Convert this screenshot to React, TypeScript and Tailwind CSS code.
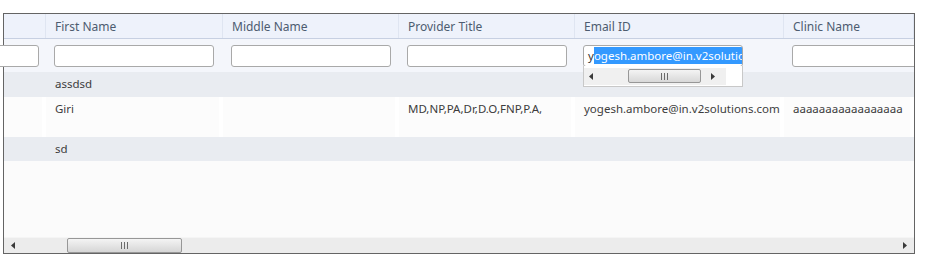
const cols = [
  { key: "sel", label: "", w: "w-[42px]" },
  { key: "first", label: "First Name", w: "w-[177px]" },
  { key: "middle", label: "Middle Name", w: "w-[176px]" },
  { key: "title", label: "Provider Title", w: "w-[176px]" },
  { key: "email", label: "Email ID", w: "w-[209px]" },
  { key: "clinic", label: "Clinic Name", w: "flex-1" },
];

const rows = [
  { first: "assdsd", middle: "", title: "", email: "", clinic: "", alt: true, h: "h-[25px]" },
  {
    first: "Giri",
    middle: "",
    title: "MD,NP,PA,Dr,D.O,FNP,P.A,",
    email: "yogesh.ambore@in.v2solutions.com",
    clinic: "aaaaaaaaaaaaaaaaa",
    alt: false,
    h: "h-[40px]",
  },
  { first: "sd", middle: "", title: "", email: "", clinic: "", alt: true, h: "h-[24px]" },
];

const Grip = () => (
  <div className="flex gap-[2px]">
    <span className="w-px h-[7px] bg-[#6b6b6b]" />
    <span className="w-px h-[7px] bg-[#6b6b6b]" />
    <span className="w-px h-[7px] bg-[#6b6b6b]" />
  </div>
);

const Arrow = ({ dir }: { dir: "left" | "right" }) => (
  <svg width="4" height="7" viewBox="0 0 4 7">
    {dir === "left" ? (
      <path d="M4 0 L0 3.5 L4 7 Z" fill="#3a3a3a" />
    ) : (
      <path d="M0 0 L4 3.5 L0 7 Z" fill="#3a3a3a" />
    )}
  </svg>
);

const App = () => {
  return (
    <div className="w-[939px] h-[272px] bg-white pt-[13px] pl-[3px] font-['Noto_Sans',sans-serif] text-[11.5px]">
      <div className="w-[912px] h-[241px] border border-[#646464] bg-[#fbfbfb] flex flex-col">
        {/* header */}
        <div className="h-[25px] flex bg-[#eef2fb] border-b border-[#c7d0e2]">
          {cols.map((c) => (
            <div
              key={c.key}
              className={`${c.w} shrink-0 border-r border-[#dfe5f1] pl-[9px] pt-[1px] flex items-center text-[12px] text-[#4d5c70]`}
            >
              {c.label}
            </div>
          ))}
        </div>

        {/* filter row */}
        <div className="h-[33px] flex bg-[#f4f6fb] relative">
          {cols.map((c) =>
            c.key === "sel" ? (
              <div key={c.key} className={`${c.w} shrink-0 flex items-center`}>
                <div className="ml-[-8px] w-[43px] h-[22px] bg-white border border-[#a9a9a9] rounded-[3px]" />
              </div>
            ) : (
              <div key={c.key} className={`${c.w} shrink-0 pl-[8px] flex items-center overflow-hidden`}>
                {c.key === "email" ? (
                  <div className="relative w-[160px] h-[22px] bg-white border border-[#a9a9a9] rounded-[3px] flex items-center pl-[4px] overflow-hidden whitespace-nowrap text-[#333]">
                    <span>y</span>
                    <span className="bg-[#3399ff] text-white pr-[4px]">ogesh.ambore@in.v2solutio</span>
                  </div>
                ) : (
                  <div className="w-[160px] h-[22px] shrink-0 bg-white border border-[#a9a9a9] rounded-[3px]" />
                )}
              </div>
            )
          )}

          {/* email dropdown with its own scrollbar */}
          <div className="absolute left-[579px] top-[27px] w-[160px] h-[21px] bg-white border border-[#c8c8c8] border-t-0 flex items-center z-10">
            <div className="h-[17px] w-[142px] bg-[#f0f0f0] flex items-center">
              <div className="w-[14px] flex justify-center">
                <Arrow dir="left" />
              </div>
              <div className="ml-[30px] w-[73px] h-[14px] rounded-[2px] border border-[#979797] bg-gradient-to-b from-[#f4f4f4] to-[#d8d8d8] flex items-center justify-center">
                <Grip />
              </div>
              <div className="ml-[8px] w-[8px] flex justify-center">
                <Arrow dir="right" />
              </div>
            </div>
          </div>
        </div>

        {/* data rows */}
        {rows.map((r, i) => (
          <div key={i} className={`${r.h} flex ${r.alt ? "bg-[#e9ecf1]" : "bg-[#fcfcfc]"} text-[#3c3c3c]`}>
            {cols.map((c) => (
              <div
                key={c.key}
                className={`${c.w} shrink-0 pl-[9px] pt-[3px] whitespace-nowrap overflow-hidden ${
                  r.alt ? "" : "border-r-[4px] border-[#ffffff]"
                }`}
              >
                {c.key === "sel" ? "" : (r as Record<string, any>)[c.key]}
              </div>
            ))}
          </div>
        ))}

        <div className="flex-1" />

        {/* horizontal scrollbar */}
        <div className="h-[16px] bg-[#ececec] border-t border-[#f5f5f5] flex items-center">
          <div className="w-[14px] ml-[2px] flex justify-center">
            <Arrow dir="left" />
          </div>
          <div className="ml-[47px] w-[115px] h-[15px] rounded-[2px] border border-[#979797] bg-gradient-to-b from-[#f4f4f4] to-[#d6d6d6] flex items-center justify-center">
            <Grip />
          </div>
          <div className="flex-1" />
          <div className="w-[14px] mr-[2px] flex justify-center">
            <Arrow dir="right" />
          </div>
        </div>
      </div>
    </div>
  );
};

export default App;
